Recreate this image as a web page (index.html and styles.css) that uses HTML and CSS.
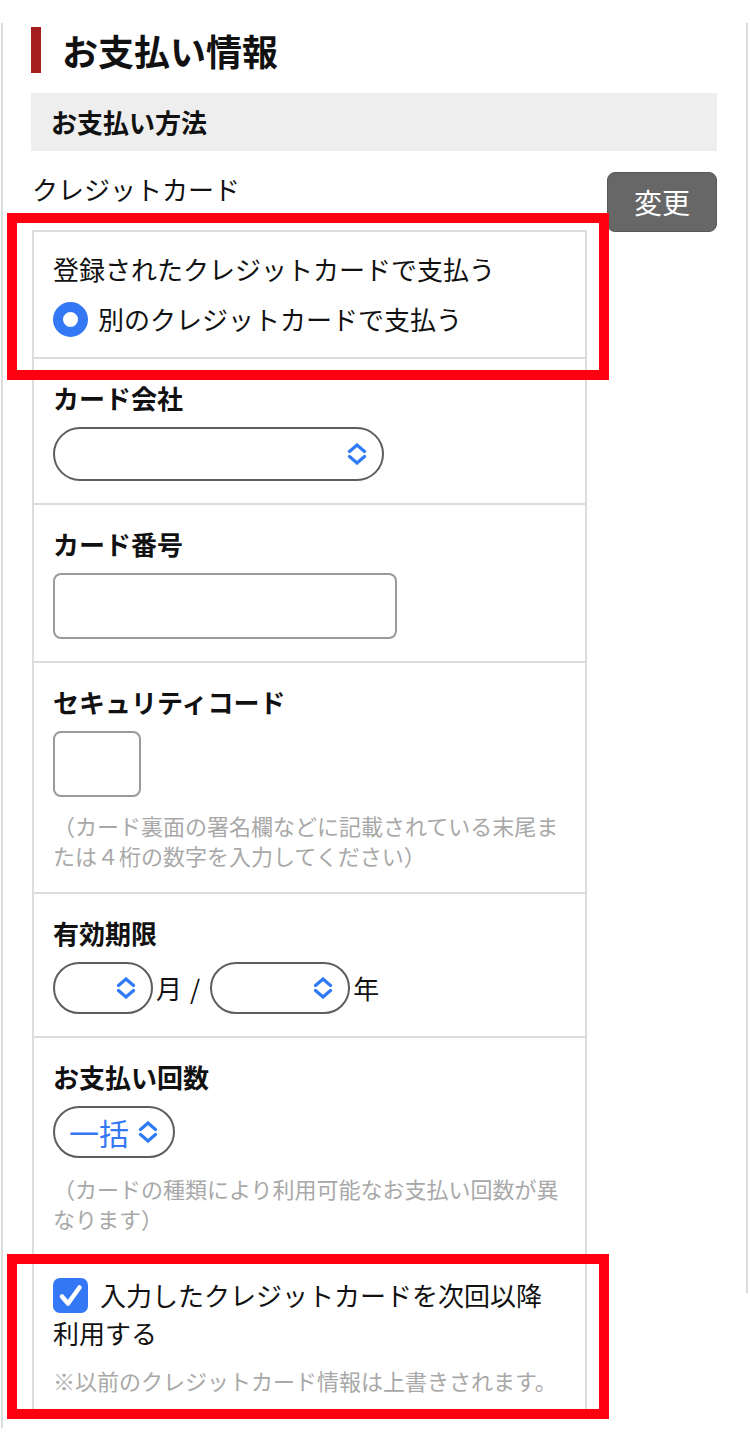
FILE: index.html
```html
<!DOCTYPE html>
<html lang="ja">
<head>
<meta charset="utf-8">
<title>お支払い情報</title>
<link rel="stylesheet" href="styles.css">
</head>
<body>
<div class="page">
  <div class="title-row">
    <span class="title-bar"></span>
    <h1 class="title">お支払い情報</h1>
  </div>
  <h2 class="subhead">お支払い方法</h2>
  <div class="method">
    <div class="method-main">
      <p class="method-name">クレジットカード</p>
      <div class="panel">
        <div class="sec sec-choice">
          <p class="choice">登録されたクレジットカードで支払う</p>
          <p class="choice choice-radio"><span class="radio"></span>別のクレジットカードで支払う</p>
        </div>
        <div class="sec">
          <p class="label">カード会社</p>
          <div class="select select-company">
            <svg class="chev" viewBox="0 0 20 22" width="20" height="22"><path d="M2.5 8.5 L10 2 L17.5 8.5 M2.5 13.5 L10 20 L17.5 13.5"/></svg>
          </div>
        </div>
        <div class="sec">
          <p class="label">カード番号</p>
          <div class="input input-number"></div>
        </div>
        <div class="sec">
          <p class="label">セキュリティコード</p>
          <div class="input input-code"></div>
          <p class="help">（カード裏面の署名欄などに記載されている末尾または４桁の数字を入力してください）</p>
        </div>
        <div class="sec">
          <p class="label">有効期限</p>
          <div class="expiry">
            <div class="select select-month">
              <svg class="chev" viewBox="0 0 20 22" width="20" height="22"><path d="M2.5 8.5 L10 2 L17.5 8.5 M2.5 13.5 L10 20 L17.5 13.5"/></svg>
            </div>
            <span class="unit unit-month">月</span>
            <span class="slash">/</span>
            <div class="select select-year">
              <svg class="chev" viewBox="0 0 20 22" width="20" height="22"><path d="M2.5 8.5 L10 2 L17.5 8.5 M2.5 13.5 L10 20 L17.5 13.5"/></svg>
            </div>
            <span class="unit">年</span>
          </div>
        </div>
        <div class="sec">
          <p class="label">お支払い回数</p>
          <div class="select select-count">
            <span class="select-value">一括</span>
            <svg class="chev" viewBox="0 0 20 22" width="20" height="22"><path d="M2.5 8.5 L10 2 L17.5 8.5 M2.5 13.5 L10 20 L17.5 13.5"/></svg>
          </div>
          <p class="help help-count">（カードの種類により利用可能なお支払い回数が異なります）</p>
        </div>
        <div class="sec sec-save">
          <p class="save"><span class="checkbox"><svg viewBox="0 0 35 35" width="35" height="35"><path d="M9 18.5 L15 25.5 L26.5 9.5"/></svg></span>入力したクレジットカードを次回以降<br>利用する</p>
          <p class="note">※以前のクレジットカード情報は上書きされます。</p>
        </div>
      </div>
    </div>
    <button class="change-btn" type="button">変更</button>
  </div>
</div>
<div class="mark mark-top"></div>
<div class="mark mark-bottom"></div>
</body>
</html>
```
FILE: styles.css
```css
* { box-sizing: border-box; }

body {
  margin: 0;
  position: relative;
  width: 750px;
  height: 1443px;
  overflow: hidden;
  background: #fff;
  color: #111;
  font-family: "Noto Sans CJK JP", "Noto Sans", sans-serif;
}

p, h1, h2 { margin: 0; }

.page {
  position: relative;
  margin: 23px 0 0 1px;
  width: 748px;
  height: 1405px;
  border-left: 2px solid #dcdcdc;
  padding: 4px 32px 0 28px;
}

.page::after {
  content: "";
  position: absolute;
  right: 1px;
  top: 0;
  width: 2px;
  height: 1270px;
  background: #dcdcdc;
}

.title-row {
  display: flex;
  align-items: center;
  gap: 21px;
  height: 46px;
}

.title-bar {
  width: 10px;
  height: 46px;
  background: #a61e1e;
}

.title {
  font-size: 36px;
  font-weight: 700;
  line-height: 46px;
  color: #111;
}

.subhead {
  margin-top: 20px;
  height: 58px;
  padding-left: 20px;
  background: #eeeeee;
  font-size: 26px;
  font-weight: 700;
  line-height: 58px;
}

.method {
  display: flex;
  justify-content: space-between;
  align-items: flex-start;
}

.method-main {
  margin-left: 1px;
  width: 555px;
}

.method-name {
  margin-top: 19px;
  font-size: 26px;
  line-height: 38px;
}

.change-btn {
  margin-top: 21px;
  width: 110px;
  height: 60px;
  padding: 0;
  background: #676767;
  border: 1px solid #585858;
  border-radius: 8px;
  color: #fff;
  font-family: inherit;
  font-size: 28px;
  line-height: 1;
}

.panel {
  margin-top: 22px;
  border: 2px solid #dcdcdc;
}

.sec {
  padding: 21px 19px 22px;
  border-top: 2px solid #dcdcdc;
}

.sec:first-child { border-top: 0; }

.sec-choice { padding: 18px 19px 19px; }

.choice {
  font-size: 26px;
  line-height: 38px;
}

.choice-radio {
  margin-top: 12px;
  display: flex;
  align-items: center;
  gap: 10px;
}

.radio {
  width: 35px;
  height: 35px;
  border-radius: 50%;
  border: 10px solid #3478f6;
  background: #fff;
}

.label {
  font-size: 26px;
  font-weight: 700;
  line-height: 36px;
  margin-bottom: 11px;
}

.select {
  display: flex;
  align-items: center;
  justify-content: flex-end;
  height: 52px;
  padding-right: 15px;
  border: 2px solid #5e5e5e;
  border-radius: 27px;
}

.chev {
  display: block;
  fill: none;
  stroke: #2f7bf6;
  stroke-width: 3.2;
  stroke-linecap: round;
  stroke-linejoin: miter;
}

.select-company {
  width: 331px;
  height: 54px;
}

.input {
  height: 66px;
  border: 2px solid #9a9a9a;
  border-radius: 8px;
}

.input-number { width: 344px; }

.input-code { width: 88px; }

.help {
  margin-top: 13px;
  font-size: 22px;
  line-height: 30px;
  color: #a8a8a8;
}

.help-count { margin-top: 15px; }

.expiry {
  display: flex;
  align-items: center;
}

.select-month { width: 100px; }

.select-year { width: 140px; }

.unit {
  margin-left: 3px;
  font-size: 26px;
  line-height: 36px;
}

.slash {
  margin-left: 8px;
  margin-right: 10px;
  font-size: 26px;
  line-height: 36px;
}

.select-count {
  width: 122px;
  justify-content: flex-start;
  gap: 9px;
  padding-left: 14px;
}

.select-value {
  font-size: 30px;
  line-height: 1;
  color: #3478f6;
}

.sec-save { padding: 19px 19px 14px; }

.save {
  font-size: 26px;
  line-height: 38px;
}

.checkbox {
  display: inline-block;
  vertical-align: top;
  width: 35px;
  height: 35px;
  margin: 2px 12px 0 0;
  border-radius: 7px;
  background: #3478f6;
}

.checkbox svg {
  display: block;
  fill: none;
  stroke: #fff;
  stroke-width: 4.5;
  stroke-linecap: round;
  stroke-linejoin: round;
}

.note {
  margin-top: 13px;
  font-size: 22px;
  line-height: 30px;
  color: #a8a8a8;
}

.mark {
  position: absolute;
  left: 7px;
  width: 602px;
  border: 10px solid #ff0010;
}

.mark-top {
  top: 213px;
  height: 167px;
}

.mark-bottom {
  top: 1254px;
  height: 165px;
}
```
